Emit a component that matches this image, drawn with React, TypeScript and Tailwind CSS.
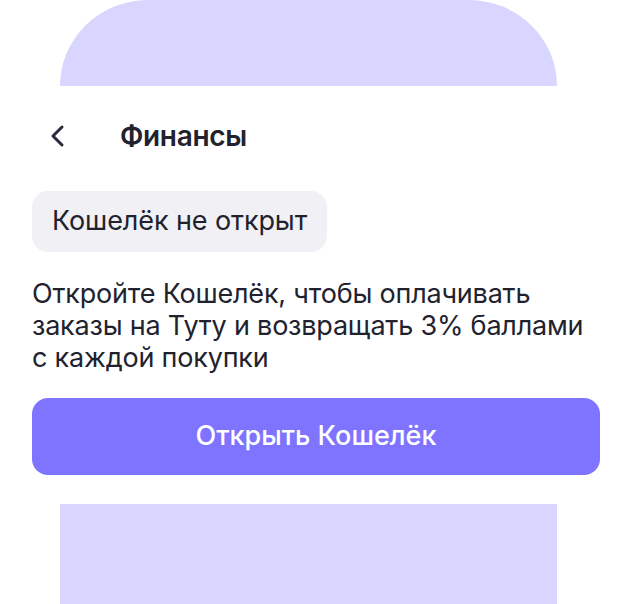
import React from "react";

export default function App() {
  return (
    <div className="w-[632px] h-[604px] bg-white overflow-hidden flex flex-col" style={{ fontFamily: "Inter, 'Noto Sans', sans-serif" }}>
      <div className="mx-[60px] w-[497px] h-[86px] shrink-0 bg-[#D8D6FE] rounded-t-[90px_88px]" />
      <div className="h-[28px] shrink-0" />
      <div className="flex items-center h-[44px] px-[32px]">
        <svg width="44" height="44" viewBox="0 0 44 44" className="shrink-0" fill="none">
          <path d="M30 13 L21 22 L30 31" stroke="#2A2A3C" strokeWidth="3" strokeLinecap="round" strokeLinejoin="round" />
        </svg>
        <div className="ml-[44px] text-[28px] font-semibold text-[#22222F] tracking-[-0.3px]">Финансы</div>
      </div>
      <div className="px-[32px] mt-[33px]">
        <div className="inline-flex items-center h-[61px] px-[20px] rounded-[16px] bg-[#F1F0F5] text-[27px] text-[#22222F] tracking-[-0.1px]">
          Кошелёк не открыт
        </div>
      </div>
      <div className="px-[32px] mt-[26px] text-[27px] leading-[32px] text-[#22222F] whitespace-nowrap tracking-[-0.2px]">
        Откройте Кошелёк, чтобы оплачивать<br />заказы на Туту и возвращать 3% баллами<br />с каждой покупки
      </div>
      <div className="mx-[32px] mt-[24px] h-[77px] shrink-0 rounded-[16px] bg-[#7E74FF] flex items-center justify-center text-white text-[27px] font-medium">
        Открыть Кошелёк
      </div>
      <div className="mx-[60px] mt-[29px] w-[497px] flex-1 bg-[#D8D6FE]" />
    </div>
  );
}
